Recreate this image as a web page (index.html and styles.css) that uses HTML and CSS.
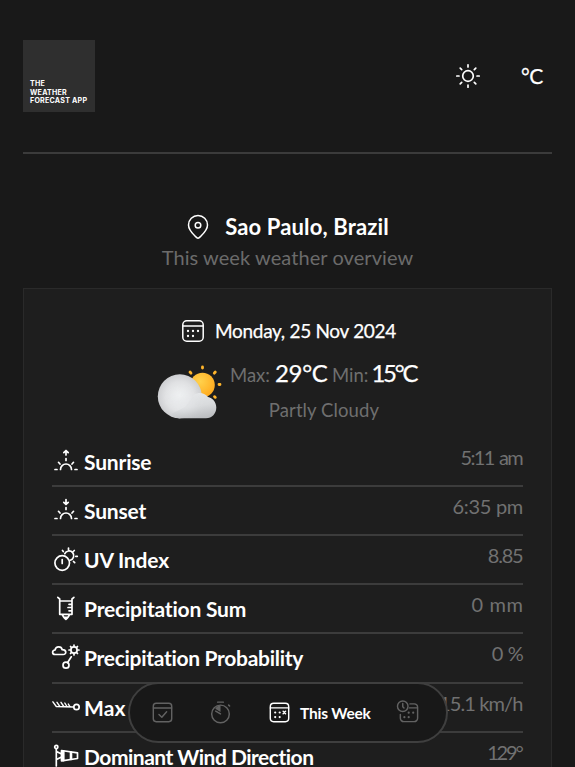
FILE: index.html
```html
<!DOCTYPE html>
<html lang="en">
<head>
<meta charset="utf-8">
<title>The Weather Forecast App</title>
<link rel="stylesheet" href="styles.css">
</head>
<body>
<div class="app">
  <header class="header">
    <div class="logo"><span>THE</span><span>WEATHER</span><span>FORECAST APP</span></div>
    <div class="controls">
      <svg class="icon24" viewBox="0 0 24 24"><g class="bold"><circle cx="12" cy="12" r="5.300"/><path d="M12 .8v2.200M12 21v2.200M.8 12H3M21 12h2.200M4.200 4.200l1.500 1.500M18.300 18.300l1.500 1.500M19.800 4.200l-1.500 1.500M5.700 18.300l-1.500 1.500"/></g></svg>
      <span class="unit">°C</span>
    </div>
  </header>

  <section class="place">
    <div class="place-row">
      <svg class="icon24" viewBox="0 0 24 24"><path d="M12 23.200c-1-.1-1.700-.9-3-2.200C5.500 17.600 2.500 14.500 2.500 10a9.500 9.500 0 0 1 19 0c0 4.500-3 7.600-6.500 11-1.300 1.300-2 2.100-3 2.200z"/><circle cx="12" cy="10.300" r="2.800"/></svg>
      <h1 class="place-name">Sao Paulo, Brazil</h1>
    </div>
    <p class="subtitle">This week weather overview</p>
  </section>

  <main class="card">
    <div class="date-row">
      <svg class="icon24" viewBox="0 0 24 24"><rect x="1.800" y="1.800" width="20.400" height="20.400" rx="4"/><path d="M2 7h20"/><path class="dots" d="M7 12h.01M12 12h.01M17 12h.01M7 17h.01M12 17h.01"/></svg>
      <span class="date">Monday, 25 Nov 2024</span>
    </div>
    <div class="summary">
      <svg class="cloud" viewBox="0 0 66 54">
        <defs>
          <radialGradient id="sun" cx=".4" cy=".35" r=".7"><stop offset="0" stop-color="#ffd24d"/><stop offset="1" stop-color="#ffa91c"/></radialGradient>
          <radialGradient id="big" cx=".5" cy=".5" r=".55"><stop offset="0" stop-color="#f2f4f5"/><stop offset=".6" stop-color="#e0e1e3"/><stop offset="1" stop-color="#c8c9cc"/></radialGradient>
          <linearGradient id="small" x1=".3" y1="0" x2=".6" y2="1"><stop offset="0" stop-color="#e6e8ea"/><stop offset=".55" stop-color="#d8dadc"/><stop offset="1" stop-color="#bbbdc0"/></linearGradient>
        </defs>
        <path class="rays" d="M45.500 2v1M58.300 7l-1 1.200M33 7l1 1.200M62 19.500h1M57.500 31.700l.8.600"/>
        <circle cx="45.500" cy="20" r="12.300" fill="url(#sun)"/>
        <circle cx="22.800" cy="31.300" r="22" fill="url(#big)"/>
        <path d="M14 49Q18 54 24 53.300H49C55 53.300 59.300 48.500 59.300 42.500 59.300 37 55.500 33 51 32 46 26 37 27 34 34L28 42z" fill="url(#small)"/>
        <ellipse cx="27" cy="38" rx="12" ry="9" fill="#e6e8ea" class="soft"/>
      </svg>
      <div class="temps">
        <div class="minmax"><span class="dim">Max:</span><b class="t29">29°C</b><span class="dim">Min:</span><b class="t15">15°C</b></div>
        <div class="condition">Partly Cloudy</div>
      </div>
    </div>

    <div class="rows">
      <div class="row">
        <svg class="row-icon" viewBox="0 0 28 28"><path d="M3 22.500h2M23 22.500h2M8.500 22.500a5.500 5.500 0 0 1 11 0M6.500 15.300l1.500 1.700M21.500 15.300 20 17M14 11.500v2M14 8V4M11.800 5.700 14 3.500l2.200 2.200"/></svg>
        <span class="label n1">Sunrise</span><span class="value v1">5:11 am</span>
      </div>
      <div class="row">
        <svg class="row-icon" viewBox="0 0 28 28"><path d="M3 22.500h2M23 22.500h2M8.500 22.500a5.500 5.500 0 0 1 11 0M6.500 15.300l1.500 1.700M21.500 15.300 20 17M14 11.500v2M14 3.500v4.500M11.800 6.300 14 8.500l2.200-2.200"/></svg>
        <span class="label n2">Sunset</span><span class="value v2">6:35 pm</span>
      </div>
      <div class="row">
        <svg class="row-icon" viewBox="0 0 28 28"><circle cx="10.200" cy="18" r="7.300"/><path d="M10.200 14.500v4M12.800 8.700a4.700 4.700 0 1 1 5.500 6.500M16.500 3v1.500M10.500 5.500l.8 1M22.300 5.500l-1 1M23.800 11.300h1.500M21.500 16.500l1.200 1.200"/></svg>
        <span class="label n3">UV Index</span><span class="value v3">8.85</span>
      </div>
      <div class="row">
        <svg class="row-icon" viewBox="0 0 28 28"><path d="M5.800 3.300l1.900 1.700v15.300h12.300V5l1.900-1.700M8 7h12M17 10.300h3M16 13.500h4M17 16.800h3M10.300 20.800l1.500 2.500h4.200l1.500-2.500M12.200 23.800l1.700 1.500 1.700-1.500"/></svg>
        <span class="label n4">Precipitation Sum</span><span class="value v4">0 mm</span>
      </div>
      <div class="row">
        <svg class="row-icon" viewBox="0 0 28 28"><path d="M3.200 11.500C-.2 11.500-.2 7.300 3 7c.8-4 6.400-4 7.200-.3 4.600 0 4.600 4.800.9 4.800z"/><circle cx="22" cy="7" r="3.100"/><path d="M22 2v1M22 11v1M17 7h1M26 7h1M18.500 3.500l.6.600M25.500 3.500l-.6.600M18.500 10.500l.6-.6M25.500 10.500l-.6-.6M19.300 13.800l-3.800 6"/><circle cx="14" cy="22.200" r="3"/></svg>
        <span class="label n5">Precipitation Probability</span><span class="value v5">0 %</span>
      </div>
      <div class="row">
        <svg class="row-icon" viewBox="0 0 28 28"><path stroke-width="1.400" d="M.9 8.800 4.300 13.500 21.500 14M5 9.300l2.800 4M9 9.300l2.800 4.200M12.800 10l2.200 3.500M16.300 11l1.600 2.700"/><circle cx="24.500" cy="14" r="2.700"/></svg>
        <span class="label n6">Max Wind Speed</span><span class="value v6">15.1 km/h</span>
      </div>
      <div class="row">
        <svg class="row-icon" viewBox="0 0 28 28"><circle cx="4.300" cy="5" r="1.600"/><path d="M4.300 7V24M4.500 9.500l4 2M4.500 17.500l4-2M9.500 8.500v10.300L25.500 16.500V10.800z"/><path d="M11.300 9.300v9M19 10.500v6.500" stroke-width="2.600"/></svg>
        <span class="label n7">Dominant Wind Direction</span><span class="value v7">129°</span>
      </div>
    </div>
  </main>
</div>

<nav class="nav">
  <svg class="nav-icon a" viewBox="0 0 24 24"><rect x="2.400" y="2.400" width="19.200" height="19.200" rx="3"/><path d="M2.500 7.400h19M8.300 14l3 3 5-5.700"/></svg>
  <svg class="nav-icon b" viewBox="0 0 24 24"><circle cx="12" cy="13.500" r="9.200"/><path d="M9 1.200h6M20.500 4.300l1 1M12 13.500 7 10.500"/><path class="fill" d="M12 4.500v7L6.500 8.200C8 6 9.500 4.500 12 4.500z"/></svg>
  <div class="active">
    <svg class="nav-icon" viewBox="0 0 24 24"><rect x="2.400" y="2.400" width="19.200" height="19.200" rx="3.500"/><path d="M2.500 7.200h19"/><path class="dots" d="M7.500 12h.01M12.200 12h.01M7.500 16.800h.01M12.200 16.800h.01"/><path d="M15.800 10.800l2.500 2.500M18.300 10.800l-2.500 2.500"/></svg>
    <span class="nav-text">This Week</span>
  </div>
  <svg class="nav-icon d" viewBox="0 0 24 24"><circle cx="6" cy="5.500" r="5.500"/><path d="M6 2.700v3.200l1.300 1.300M13.500 3H18a3.500 3.500 0 0 1 3.500 3.500v11.500a3.500 3.500 0 0 1-3.500 3.500H7A3.500 3.500 0 0 1 3.500 18v-4M13 7.200h8.500"/><path class="dots" d="M12.200 12.200h.01M16.900 12.200h.01M7.700 16.900h.01M12.200 16.900h.01"/></svg>
</nav>
</body>
</html>
```
FILE: styles.css
```css
* { box-sizing: border-box; }
html { height: 100%; overflow: hidden; }
body {
  margin: 0;
  height: 100%;
  overflow: hidden;
  background: #191919;
  color: #fff;
  font-family: Lato, "Open Sans", sans-serif;
  font-variant-ligatures: none;
}
h1, p { margin: 0; }
svg {
  display: block;
  flex: none;
  fill: none;
  stroke: currentColor;
  stroke-width: 1.5;
  stroke-linecap: round;
  stroke-linejoin: round;
  overflow: visible;
}
.dots { stroke-width: 2.3; }
.bold { stroke-width: 1.7; }
.icon24 { width: 24px; height: 24px; }
.app { height: 100%; padding: 0 23px; overflow: hidden; }

.header {
  height: 154px;
  padding-top: 40px;
  display: flex;
  justify-content: space-between;
  border-bottom: 2px solid #3b3b3b;
}
.logo {
  width: 72px;
  height: 72px;
  padding: 0 0 6px 7px;
  background: #2f2f2f;
  display: flex;
  flex-direction: column;
  justify-content: flex-end;
  font: 700 7.1px/8.7px Inter, sans-serif;
  letter-spacing: .24px;
  white-space: nowrap;
}
.controls { display: flex; align-items: center; height: 72px; padding-right: 9px; gap: 41px; }
.unit { width: 22px; font-size: 21px; line-height: 24px; letter-spacing: -.5px; -webkit-text-stroke: .25px; }

.place { padding-top: 60px; height: 134px; display: flex; flex-direction: column; align-items: center; }
.place-row { display: flex; align-items: center; gap: 15px; height: 26px; }
.place-name { font-size: 22px; line-height: 26px; font-weight: 700; letter-spacing: .14px; white-space: nowrap; margin-top: -1px; }
.subtitle { margin-top: 4px; font-size: 20px; line-height: 26px; letter-spacing: .08px; color: #6b6b6b; white-space: nowrap; }

.card {
  height: 520px;
  padding: 28px 28px 0;
  background: #1e1e1e;
  border: 1px solid #2a2a2a;
}
.date-row { display: flex; justify-content: center; align-items: center; gap: 10px; height: 28px; padding-left: 2px; }
.date { font-size: 19px; line-height: 24px; letter-spacing: -.3px; white-space: nowrap; -webkit-text-stroke: .25px; }
.summary { display: flex; justify-content: center; gap: 7px; height: 88.6px; margin-top: 4px; }
.cloud { width: 66px; height: 54px; margin-top: 15.500px; stroke: none; }
.rays { stroke: #ffb52b; stroke-width: 2.8; }
.soft { opacity: .65; filter: blur(4px); }
.temps { width: 188px; }
.minmax { display: flex; align-items: baseline; height: 42px; padding-top: 10px; line-height: 28px; white-space: nowrap; }
.minmax b { font-size: 24px; font-weight: 400; -webkit-text-stroke: .25px; }
.minmax .t29 { width: 57px; margin-left: 5px; letter-spacing: -.3px; }
.minmax .t15 { margin-left: 3px; letter-spacing: -2.2px; }
.dim { font-size: 18.5px; color: #6f6f6f; }
.condition { margin-top: 6px; font-size: 18.5px; line-height: 26px; letter-spacing: .1px; color: #6f6f6f; text-align: center; }

.row { display: flex; height: 49.2px; border-bottom: 2px solid #3c3c3c; white-space: nowrap; }
.row-icon { width: 28px; height: 28px; margin-top: 9px; stroke-width: 1.7; }
.label { margin: 11px auto 0 4px; font-size: 21px; line-height: 26px; font-weight: 700; }
.value { margin-top: 6px; font-size: 20px; line-height: 26px; color: #717171; }
.n1, .n2, .n3 { letter-spacing: -.18px; }
.n4 { letter-spacing: -.2px; }
.n5 { letter-spacing: -.3px; }
.n6 { letter-spacing: .1px; word-spacing: 5px; }
.n7 { letter-spacing: -.5px; }
.v1 { letter-spacing: -1.7px; word-spacing: 2px; margin-right: 1px; }
.v2 { letter-spacing: -.3px; }
.v3 { letter-spacing: -1.2px; margin-right: .5px; }
.v4 { letter-spacing: .6px; margin-right: -.6px; }
.v5 { letter-spacing: -1.2px; word-spacing: 1.5px; margin-right: .5px; }
.v6 { letter-spacing: -.9px; margin-right: .6px; }
.v7 { letter-spacing: -2.2px; margin-right: 1.5px; }

.nav {
  position: fixed;
  left: 128px;
  top: 682px;
  width: 320px;
  height: 61px;
  padding-left: 21px;
  display: flex;
  align-items: center;
  background: #181818;
  border: 2px solid #3f3f3f;
  border-radius: 31px;
  color: #626262;
}
.nav-icon { width: 23px; height: 23px; }
.b { margin-left: 35px; }
.active { display: flex; align-items: center; gap: 9px; margin-left: 36px; color: #fff; }
.nav-text { width: 71px; font-size: 15.5px; font-weight: 700; letter-spacing: -.2px; white-space: nowrap; }
.d { margin-left: 26px; }
.fill { fill: currentColor; stroke: none; }
```
